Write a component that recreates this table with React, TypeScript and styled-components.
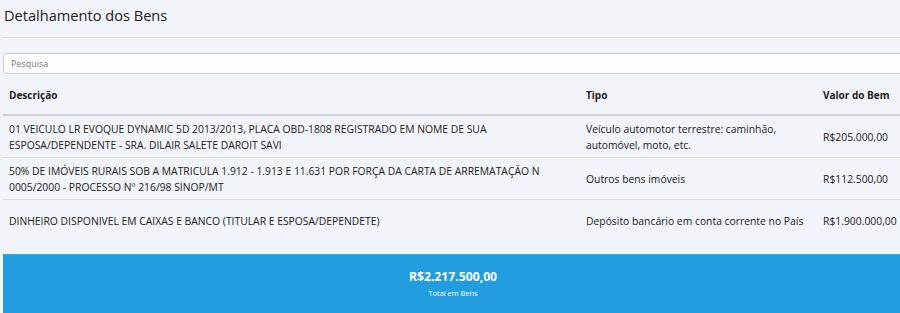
import React from "react";
import styled, { createGlobalStyle } from "styled-components";

const Global = createGlobalStyle`
  html, body { margin: 0; padding: 0; background: #f1f4f8; }
  body { font-family: "Open Sans", "Noto Sans", sans-serif; color: #222; overflow: hidden; }
`;

const Page = styled.div`
  padding: 0 0 0 3px;
  width: 897px;
`;

const Title = styled.h2`
  margin: 0;
  padding: 5px 0 0 1px;
  height: 31px;
  box-sizing: border-box;
  font-size: 14.6px;
  font-weight: 400;
  color: #222;
  line-height: 20px;
`;

const Rule = styled.hr`
  margin: 6px 0 15px 0;
  border: 0;
  border-top: 1px solid #dcdfe4;
`;

const Search = styled.input`
  display: block;
  box-sizing: border-box;
  width: 900px;
  height: 21px;
  padding: 0 7px;
  border: 1px solid #c9ccd1;
  border-radius: 3px;
  background: #fff;
  font-family: inherit;
  font-size: 9px;
  color: #333;
  outline: none;
  &::placeholder { color: #777; }
`;

const Table = styled.table`
  width: 915px;
  border-collapse: collapse;
  margin-top: 8px;
  table-layout: fixed;
  font-size: 10.35px;
`;

const Col = styled.col<{ $w?: number }>`
  width: ${(p) => (p.$w ? `${p.$w}px` : "auto")};
`;

const Th = styled.th`
  text-align: left;
  font-weight: 700;
  font-size: 10px;
  padding: 5px 6px 0;
  height: 33px;
  box-sizing: border-box;
  border-bottom: 2px solid #cfd2d6;
  vertical-align: top;
  line-height: 16px;
`;

const Td = styled.td<{ $last?: boolean }>`
  padding: 0 6px;
  height: 41px;
  line-height: 16px;
  vertical-align: middle;
  border-bottom: ${(p) => (p.$last ? "none" : "1px solid #dcdfe3")};
`;

const Total = styled.div`
  margin-top: 13px;
  height: 60px;
  width: 900px;
  background: #219ddf;
  border-top: 1px solid #3aa8e4;
  display: flex;
  flex-direction: column;
  align-items: center;
  justify-content: center;
  color: #fff;
  padding-bottom: 6px;
  box-sizing: border-box;
`;

const TotalValue = styled.div`
  font-size: 12.2px;
  font-weight: 700;
  line-height: 16px;
  margin-top: 4px;
`;

const TotalLabel = styled.div`
  font-size: 7.4px;
  line-height: 10px;
  margin-top: 3px;
`;

const rows = [
  {
    d: "01 VEICULO LR EVOQUE DYNAMIC 5D 2013/2013, PLACA OBD-1808 REGISTRADO EM NOME DE SUA ESPOSA/DEPENDENTE - SRA. DILAIR SALETE DAROIT SAVI",
    t: "Veículo automotor terrestre: caminhão, automóvel, moto, etc.",
    v: "R$205.000,00",
  },
  {
    d: "50% DE IMÓVEIS RURAIS SOB A MATRICULA 1.912 - 1.913 E 11.631 POR FORÇA DA CARTA DE ARREMATAÇÃO N 0005/2000 - PROCESSO Nº 216/98 SINOP/MT",
    t: "Outros bens imóveis",
    v: "R$112.500,00",
  },
  {
    d: "DINHEIRO DISPONIVEL EM CAIXAS E BANCO (TITULAR E ESPOSA/DEPENDETE)",
    t: "Depósito bancário em conta corrente no País",
    v: "R$1.900.000,00",
  },
];

export default function App() {
  return (
    <>
      <Global />
      <Page>
        <Title>Detalhamento dos Bens</Title>
        <Rule />
        <Search placeholder="Pesquisa" />
        <Table>
          <colgroup>
            <Col $w={577} />
            <Col $w={237} />
            <Col />
          </colgroup>
          <thead>
            <tr>
              <Th>Descrição</Th>
              <Th>Tipo</Th>
              <Th>Valor do Bem</Th>
            </tr>
          </thead>
          <tbody>
            {rows.map((r, i) => (
              <tr key={i}>
                <Td $last={i === rows.length - 1}>{r.d}</Td>
                <Td $last={i === rows.length - 1}>{r.t}</Td>
                <Td $last={i === rows.length - 1}>{r.v}</Td>
              </tr>
            ))}
          </tbody>
        </Table>
        <Total>
          <TotalValue>R$2.217.500,00</TotalValue>
          <TotalLabel>Total em Bens</TotalLabel>
        </Total>
      </Page>
    </>
  );
}
